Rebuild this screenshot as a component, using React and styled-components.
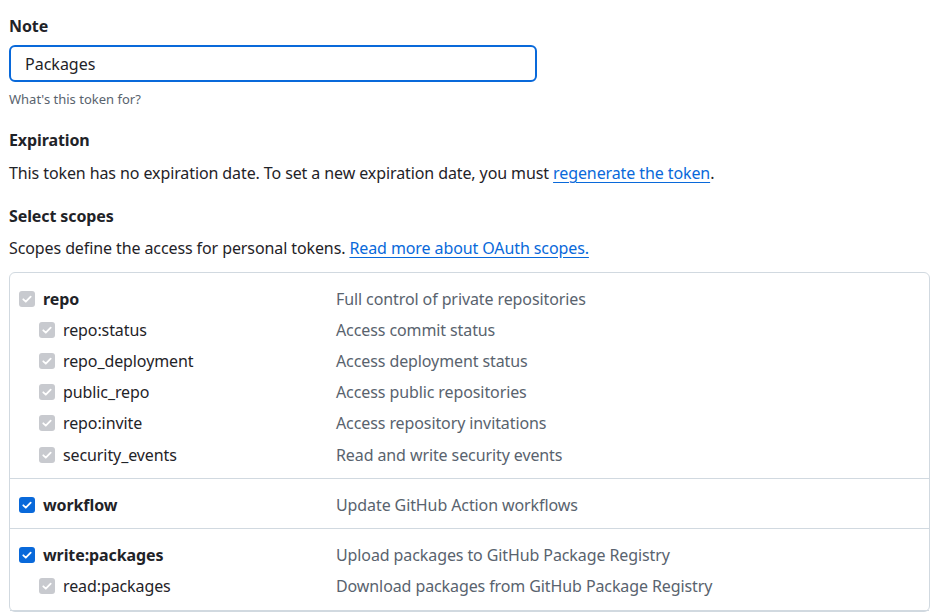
import React from 'react'
import styled, { createGlobalStyle } from 'styled-components'

const scopeGroups = [
    {
        name: 'repo',
        desc: 'Full control of private repositories',
        checked: true,
        disabled: true,
        children: [
            { name: 'repo:status', desc: 'Access commit status' },
            { name: 'repo_deployment', desc: 'Access deployment status' },
            { name: 'public_repo', desc: 'Access public repositories' },
            { name: 'repo:invite', desc: 'Access repository invitations' },
            { name: 'security_events', desc: 'Read and write security events' }
        ]
    },
    {
        name: 'workflow',
        desc: 'Update GitHub Action workflows',
        checked: true,
        children: []
    },
    {
        name: 'write:packages',
        desc: 'Upload packages to GitHub Package Registry',
        checked: true,
        children: [
            { name: 'read:packages', desc: 'Download packages from GitHub Package Registry' }
        ]
    }
]

const GlobalStyle = createGlobalStyle`
    body {
        margin: 0;
        background: #ffffff;
        font-family: "Segoe UI", "Noto Sans", "Liberation Sans", sans-serif;
        letter-spacing: -0.1px;
        color: #1f2328;
    }
`

function CheckBox({ muted }) {
    return (
        <Box $muted={muted}>
            <svg width="12" height="12" viewBox="0 0 12 12">
                <path d="M2.3 6.3 L4.8 8.7 L9.7 3.6" fill="none" stroke="#fff" strokeWidth="1.8" strokeLinecap="round" strokeLinejoin="round" />
            </svg>
        </Box>
    )
}

function App() {
    return (
        <Page>
            <GlobalStyle />
            <Label>Note</Label>
            <Input defaultValue="Packages" />
            <Hint>What's this token for?</Hint>

            <Label $gap={22}>Expiration</Label>
            <Text $gap={11}>
                This token has no expiration date. To set a new expiration date, you must{' '}
                <Link href="#">regenerate the token</Link>.
            </Text>

            <Label $gap={21}>Select scopes</Label>
            <Text $gap={10}>
                Scopes define the access for personal tokens. <Link href="#">Read more about OAuth scopes.</Link>
            </Text>

            <ScopeBox>
                {scopeGroups.map((g) => (
                    <Group key={g.name}>
                        <Row>
                            <Name $top>
                                <CheckBox muted={g.disabled} />
                                {g.name}
                            </Name>
                            <Desc>{g.desc}</Desc>
                        </Row>
                        {g.children.map((c) => (
                            <Row key={c.name}>
                                <Name $sub>
                                    <CheckBox muted />
                                    {c.name}
                                </Name>
                                <Desc>{c.desc}</Desc>
                            </Row>
                        ))}
                    </Group>
                ))}
            </ScopeBox>
        </Page>
    )
}

const Page = styled.div`
    padding: 16px 12px 0 9px;
    display: flex;
    flex-direction: column;
    align-items: flex-start;
`

const Label = styled.div`
    font-size: 16px;
    font-weight: 700;
    line-height: 20px;
    margin-top: ${(p) => p.$gap || 0}px;
`

const Input = styled.input`
    box-sizing: border-box;
    margin-top: 9px;
    width: 528px;
    height: 37px;
    padding: 0 14px;
    font: inherit;
    font-size: 16px;
    letter-spacing: 0;
    color: #1f2328;
    border: 2px solid #0969da;
    border-radius: 6px;
    outline: none;
    caret-color: #1f2328;
`

const Hint = styled.div`
    margin-top: 8px;
    font-size: 13px;
    letter-spacing: 0;
    line-height: 18px;
    color: #59636e;
`

const Text = styled.p`
    margin: ${(p) => p.$gap || 0}px 0 0;
    font-size: 16px;
    line-height: 24px;
`

const Link = styled.a`
    color: #0969da;
    text-decoration: underline;
    text-underline-offset: 3px;
`

const ScopeBox = styled.div`
    box-sizing: border-box;
    margin-top: 12px;
    align-self: stretch;
    border: 1px solid #d1d9e0;
    border-radius: 6px;
`

const Group = styled.div`
    padding: 10px 0 8px;
    border-bottom: 1px solid #d1d9e0;
`

const Row = styled.div`
    display: grid;
    grid-template-columns: 326px 1fr;
    height: 31.2px;
    align-items: center;
    font-size: 16px;
`

const Name = styled.div`
    display: flex;
    align-items: center;
    gap: 8px;
    padding-left: ${(p) => (p.$sub ? 29 : 9)}px;
    font-weight: ${(p) => (p.$top ? 700 : 400)};
    color: #1f2328;
`

const Desc = styled.div`
    color: #59636e;
`

const Box = styled.span`
    box-sizing: border-box;
    width: 16px;
    height: 16px;
    flex: none;
    border-radius: 3px;
    background: ${(p) => (p.$muted ? '#c8cacf' : '#0969da')};
    display: inline-flex;
    align-items: center;
    justify-content: center;
`

export default App
